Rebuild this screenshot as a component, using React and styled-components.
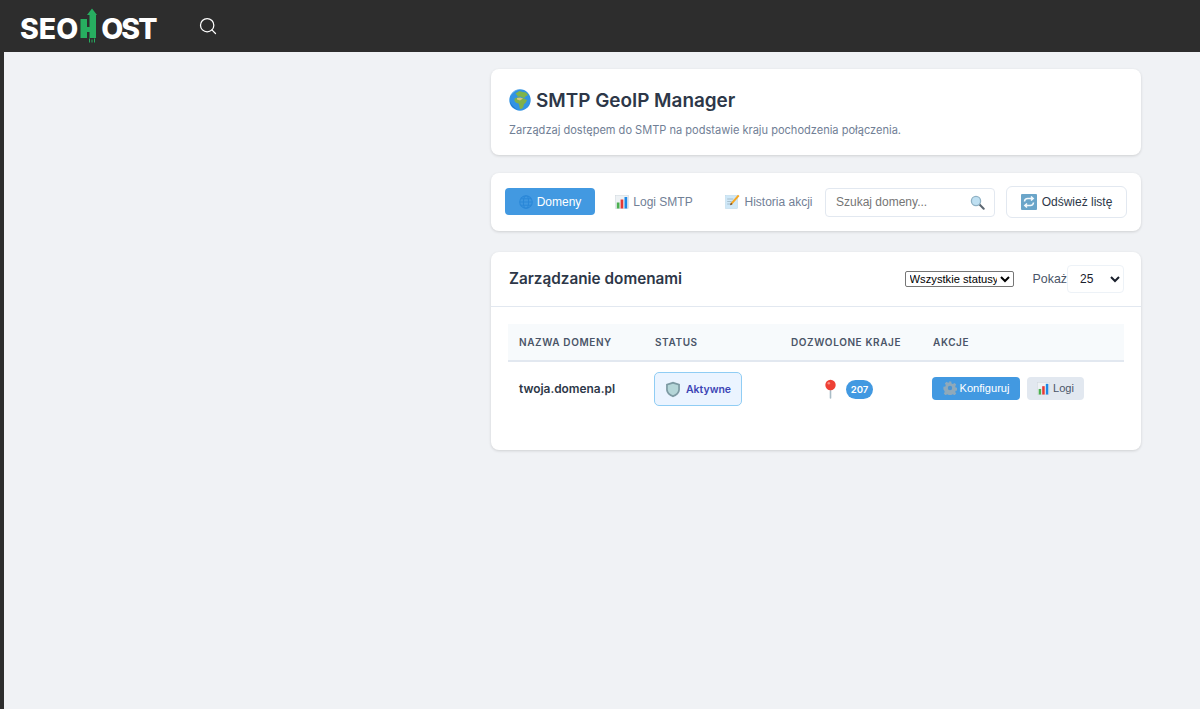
import React from 'react';
import styled, { createGlobalStyle } from 'styled-components';
import { Search } from 'lucide-react';

const GlobalStyle = createGlobalStyle`
  html, body {
    margin: 0;
    padding: 0;
    height: 100%;
    overflow: hidden;
    background: #2d2d2d;
  }
  * { box-sizing: border-box; }
`;

const Page = styled.div`
  width: 1200px;
  height: 709px;
  display: flex;
  flex-direction: column;
  background: #2d2d2d;
  font-family: Inter, "Liberation Sans", sans-serif;
`;

const TopBar = styled.header`
  height: 52px;
  display: flex;
  align-items: center;
  padding-left: 20px;
  flex: none;
`;

const Logo = styled.div`
  display: flex;
  align-items: center;
  width: 136px;
  height: 52px;
  padding-top: 4px;
  color: #fff;
  font-family: Inter, "Liberation Sans", sans-serif;
  font-weight: 800;
  font-size: 28.5px;
  letter-spacing: 0;
`;

const LogoTail = styled.span`
  letter-spacing: -1.9px;
`;

const LogoH = styled.svg`
  width: 20px;
  height: 36px;
  margin: -4px 2px 0 1px;
  flex: none;
`;

const SearchButton = styled.div`
  margin-left: 42px;
  display: flex;
  color: #fff;
`;

const Main = styled.main`
  flex: 1;
  margin-left: 4px;
  background: #f0f2f5;
  padding: 17px 59px 0 487px;
  display: flex;
  flex-direction: column;
`;

const Card = styled.section`
  background: #fff;
  border-radius: 8px;
  box-shadow: 0 1px 3px rgba(0, 0, 0, 0.14);
`;

const HeaderCard = styled(Card)`
  height: 86px;
  padding: 19px 18px 0;
`;

const Title = styled.h1`
  margin: 0;
  display: flex;
  align-items: center;
  gap: 5px;
  height: 24px;
  font-size: 18.9px;
  font-weight: 600;
  color: #2d3748;
`;

const Subtitle = styled.p`
  margin: 10px 0 0;
  font-size: 11.05px;
  line-height: 16px;
  color: #718096;
`;

const Toolbar = styled(Card)`
  margin-top: 18px;
  height: 58px;
  display: flex;
  align-items: center;
  padding: 0 14px;
`;

const Tab = styled.div`
  height: 27px;
  width: ${p => p.$width}px;
  margin-right: ${p => p.$gap}px;
  margin-top: -1px;
  display: flex;
  align-items: center;
  justify-content: center;
  gap: 4px;
  border-radius: 4px;
  font-family: "Liberation Sans", Arial, sans-serif;
  font-size: 12px;
  color: ${p => (p.$active ? '#fff' : '#718096')};
  background: ${p => (p.$active ? '#4299e1' : 'transparent')};
`;

const SearchBox = styled.div`
  width: 170px;
  height: 29px;
  margin-left: auto;
  display: flex;
  align-items: center;
  justify-content: space-between;
  padding: 0 9px 0 10px;
  border: 1px solid #e2e8f0;
  border-radius: 4px;
  font-family: "Liberation Sans", Arial, sans-serif;
  font-size: 12px;
  color: #757575;
`;

const RefreshButton = styled.div`
  width: 121px;
  height: 32px;
  margin-left: 11px;
  display: flex;
  align-items: center;
  justify-content: center;
  gap: 5px;
  border: 1px solid #e2e8f0;
  border-radius: 6px;
  font-family: "Liberation Sans", Arial, sans-serif;
  font-size: 12px;
  color: #2d3748;
`;

const TableCard = styled(Card)`
  margin-top: 21px;
  height: 198px;
`;

const TableHead = styled.div`
  height: 55px;
  display: flex;
  align-items: center;
  padding: 0 17px 0 18px;
  border-bottom: 1px solid #e2e8f0;
`;

const SectionTitle = styled.h2`
  margin: 0 0 1px;
  font-size: 15.3px;
  font-weight: 600;
  color: #2d3748;
`;

const Filters = styled.div`
  margin-left: auto;
  display: flex;
  align-items: center;
`;

const StatusSelect = styled.select`
  width: 109px;
  height: 16px;
  padding: 0;
  font-family: "Liberation Sans", Arial, sans-serif;
  font-size: 11.2px;
  color: #000;
  background: #fff;
  border: 1px solid #767676;
  border-radius: 2px;
`;

const ShowLabel = styled.span`
  margin-left: 19px;
  font-family: "Liberation Sans", Arial, sans-serif;
  font-size: 12.4px;
  color: #4a5568;
`;

const PageSize = styled.select`
  width: 57px;
  height: 28px;
  padding: 0 0 0 8px;
  font-family: "Liberation Sans", Arial, sans-serif;
  font-size: 12px;
  color: #1a202c;
  background: #fff;
  border: 1px solid #edf2f7;
  border-radius: 4px;
  outline: none;
`;

const TableWrap = styled.div`
  padding: 17px 17px 0;
`;

const Table = styled.table`
  width: 616px;
  border-collapse: collapse;
  table-layout: fixed;
`;

const Th = styled.th`
  height: 37px;
  padding: 0 11px;
  text-align: left;
  background: #f7fafc;
  border-bottom: 2px solid #e2e8f0;
  font-size: 10px;
  font-weight: 600;
  letter-spacing: 0.6px;
  text-transform: uppercase;
  color: #4a5568;
  white-space: nowrap;
`;

const Td = styled.td`
  height: 55px;
  padding: 0 11px;
  vertical-align: middle;
`;

const DomainName = styled.strong`
  font-size: 11.9px;
  font-weight: 600;
  color: #2d3748;
  position: relative;
  top: -2px;
`;

const StatusBadge = styled.div`
  width: 88px;
  height: 34px;
  margin-left: -1px;
  display: flex;
  align-items: center;
  justify-content: center;
  gap: 5px;
  background: #ebf4ff;
  border: 1px solid #90cdf4;
  border-radius: 5px;
  font-size: 10.5px;
  font-weight: 600;
  color: #3c45b5;
  padding-top: 1px;
`;

const Countries = styled.div`
  display: flex;
  align-items: center;
  justify-content: center;
  gap: 9px;
  margin-left: -5px;
`;

const CountBadge = styled.span`
  width: 27px;
  height: 19px;
  display: flex;
  align-items: center;
  justify-content: center;
  background: #4299e1;
  border-radius: 10px;
  color: #fff;
  font-size: 9.6px;
  font-weight: 600;
`;

const Actions = styled.div`
  display: flex;
  gap: 7px;
  margin: -2px 0 0 -1px;
`;

const ActionButton = styled.div`
  height: 23px;
  width: ${p => p.$width}px;
  display: flex;
  align-items: center;
  justify-content: center;
  gap: 3px;
  border-radius: 4px;
  font-family: "Liberation Sans", Arial, sans-serif;
  font-size: 11.1px;
  color: ${p => (p.$primary ? '#fff' : '#4a5568')};
  background: ${p => (p.$primary ? '#4299e1' : '#e2e8f0')};
`;

const GlobeIcon = ({ size = 20 }) => (
  <svg width={size} height={size} viewBox="0 0 22 22">
    <circle cx="11" cy="11" r="10.7" fill="#3293e4" />
    <path d="M1.500 7A10.500 10.500 0 0 1 10 .6C6.500 1.500 3.500 3.500 1.500 7z" fill="#a3d5f7" />
    <path d="M6.500 4.500l4-2.400 3 .9 3.500.4 2 2.600-2.600 1.400-1 1.700-2.800-.8-1.300-.9-2.400.3-1-1.700z" fill="#7fb44c" />
    <path d="M5.500 9.500l3.500-1.300 2.500.9 3 .2 3.500 1.600-1.300 2.800-1.800 1.600-.6 3-2 1.800-1.400-.4-.7-3.200-.6-1.900-2.600-.8-1.500-1.700z" fill="#80b04a" />
    <path d="M8 9l3.500-.4 2.500 1-3 1.800-3-.8z" fill="#d6c67f" />
    <path d="M.8 12c.6 4.300 3.800 7.800 8.200 8.800-3.800-1.600-6.800-4.600-8.200-8.800z" fill="#1b6fc0" />
  </svg>
);

const SmallGlobe = () => (
  <svg width="14" height="14" viewBox="0 0 14 14" fill="none" stroke="#2b88d8" strokeWidth="1.1">
    <circle cx="7" cy="7" r="6.300" fill="#3f97e0" />
    <ellipse cx="7" cy="7" rx="2.600" ry="6.300" />
    <path d="M1 7h12M2 3.800h10M2 10.200h10" />
  </svg>
);

const ChartIcon = ({ size = 14 }) => (
  <svg width={size} height={size} viewBox="0 0 14 14">
    <rect x="0.3" y="0.3" width="13.400" height="13.400" fill="#eef2f5" stroke="#cdd5db" strokeWidth="0.5" />
    <rect x="1.800" y="7.500" width="2.700" height="6" fill="#4caf50" />
    <rect x="5.600" y="4.500" width="2.700" height="9" fill="#e53935" />
    <rect x="9.500" y="2" width="2.700" height="11.500" fill="#1e88e5" />
  </svg>
);

const MemoIcon = () => (
  <svg width="15" height="15" viewBox="0 0 15 15">
    <rect x="0.5" y="1.500" width="12" height="13" fill="#cfe8f8" stroke="#b5d5e8" strokeWidth="0.5" />
    <path d="M2.200 5h6M2.200 7.500h4.500M2.200 10h3.500" stroke="#9db4c2" strokeWidth="0.8" />
    <path d="M13 .8l1.500 1.300-7 8-2.400 1.200.8-2.500z" fill="#f5a623" />
    <path d="M5.100 11.300l.8-2.500 1.600 1.400z" fill="#59402a" />
  </svg>
);

const MagnifierIcon = () => (
  <svg width="15" height="15" viewBox="0 0 15 15">
    <path d="M9.300 9.300l4.400 4.400" stroke="#5c6670" strokeWidth="2" strokeLinecap="round" />
    <circle cx="6" cy="6" r="4.600" fill="#bfe0f2" stroke="#8fb1c4" strokeWidth="1.300" />
  </svg>
);

const RefreshIcon = () => (
  <svg width="16" height="16" viewBox="0 0 16 16" fill="none">
    <rect width="16" height="16" rx="1" fill="#6aa5c9" />
    <path d="M3.500 7.500a3.200 3.200 0 0 1 3.200-3H12M10 2.500l2.200 2L10 6.500" stroke="#f2f8fb" strokeWidth="1.500" />
    <path d="M12.500 8.500a3.200 3.200 0 0 1-3.200 3H4M6 9.500l-2.200 2 2.200 2" stroke="#f2f8fb" strokeWidth="1.500" />
  </svg>
);

const ShieldIcon = () => (
  <svg width="16" height="17" viewBox="0 0 15 16">
    <path d="M7.500.8 14 2.800v5c0 3.600-2.800 6.200-6.500 7.400C3.800 14 1 11.400 1 7.800v-5z" fill="#7d9aa3" />
    <path d="M7.500 2.600 12.400 4v3.800c0 2.700-2 4.700-4.900 5.700-2.900-1-4.900-3-4.900-5.700V4z" fill="#b5d6d8" />
  </svg>
);

const PinIcon = () => (
  <svg width="13" height="20" viewBox="0 0 13 20">
    <path d="M6.500 9v10" stroke="#a9bcc6" strokeWidth="1.600" strokeLinecap="round" />
    <circle cx="6.500" cy="6" r="5.200" fill="#ee4035" />
    <circle cx="4.800" cy="4.200" r="1.300" fill="#f98a80" />
  </svg>
);

const GearIcon = () => (
  <svg width="14" height="14" viewBox="0 0 14 14">
    <path
      d="M5.800.5h2.400l.4 1.900 1.300.5 1.600-1 1.700 1.700-1 1.600.5 1.300 1.900.4v2.400l-1.900.4-.5 1.300 1 1.600-1.700 1.700-1.600-1-1.300.5-.4 1.900H5.800l-.4-1.900-1.300-.5-1.600 1-1.700-1.700 1-1.600-.5-1.300L.4 8.200V5.800l1.900-.4.500-1.300-1-1.600 1.700-1.700 1.600 1 1.300-.5z"
      fill="#8fa9ba"
    />
    <circle cx="7" cy="7" r="2.200" fill="#4c94d2" />
  </svg>
);

const App = () => (
  <Page>
    <GlobalStyle />
    <TopBar>
      <Logo>
        SEO
        <LogoH viewBox="0 0 20 36">
          <path
            d="M1.500 11H8v8h2.500V7H8l5-6.500L18 7h-1v23h-6.500v-6H8v6H1.500z"
            fill="#27ae60"
          />
          <path d="M10.500 30.500v4M13 31.500v3M15.500 30.500v4" stroke="#27ae60" strokeWidth="1" />
        </LogoH>
        <LogoTail>OST</LogoTail>
      </Logo>
      <SearchButton>
        <Search size={20} strokeWidth={1.5} />
      </SearchButton>
    </TopBar>
    <Main>
      <HeaderCard>
        <Title>
          <GlobeIcon size={22} />
          SMTP GeoIP Manager
        </Title>
        <Subtitle>Zarządzaj dostępem do SMTP na podstawie kraju pochodzenia połączenia.</Subtitle>
      </HeaderCard>

      <Toolbar>
        <Tab $active $width={90} $gap={11}>
          <SmallGlobe />
          Domeny
        </Tab>
        <Tab $width={96} $gap={15}>
          <ChartIcon />
          Logi SMTP
        </Tab>
        <Tab $width={104} $gap={0}>
          <MemoIcon />
          Historia akcji
        </Tab>
        <SearchBox>
          Szukaj domeny...
          <MagnifierIcon />
        </SearchBox>
        <RefreshButton>
          <RefreshIcon />
          Odśwież listę
        </RefreshButton>
      </Toolbar>

      <TableCard>
        <TableHead>
          <SectionTitle>Zarządzanie domenami</SectionTitle>
          <Filters>
            <StatusSelect defaultValue="all">
              <option value="all">Wszystkie statusy</option>
            </StatusSelect>
            <ShowLabel>Pokaż</ShowLabel>
            <PageSize defaultValue="25">
              <option value="25">25</option>
            </PageSize>
          </Filters>
        </TableHead>
        <TableWrap>
          <Table>
            <colgroup>
              <col style={{ width: 136 }} />
              <col style={{ width: 136 }} />
              <col style={{ width: 142 }} />
              <col />
            </colgroup>
            <thead>
              <tr>
                <Th>Nazwa domeny</Th>
                <Th>Status</Th>
                <Th>Dozwolone kraje</Th>
                <Th>Akcje</Th>
              </tr>
            </thead>
            <tbody>
              <tr>
                <Td>
                  <DomainName>twoja.domena.pl</DomainName>
                </Td>
                <Td>
                  <StatusBadge>
                    <ShieldIcon />
                    Aktywne
                  </StatusBadge>
                </Td>
                <Td>
                  <Countries>
                    <PinIcon />
                    <CountBadge>207</CountBadge>
                  </Countries>
                </Td>
                <Td>
                  <Actions>
                    <ActionButton $primary $width={88}>
                      <GearIcon />
                      Konfiguruj
                    </ActionButton>
                    <ActionButton $width={57}>
                      <ChartIcon size={13} />
                      Logi
                    </ActionButton>
                  </Actions>
                </Td>
              </tr>
            </tbody>
          </Table>
        </TableWrap>
      </TableCard>
    </Main>
  </Page>
);

export default App;
